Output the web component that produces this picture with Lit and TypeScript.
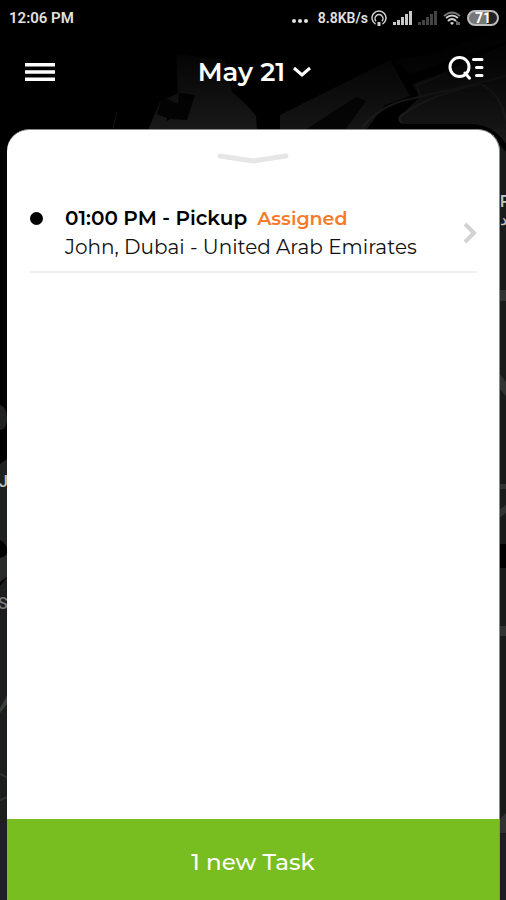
import { LitElement, html, css, svg } from "lit";
import { customElement, property, state } from "lit/decorators.js";

interface Task {
  time: string;
  kind: string;
  status: string;
  place: string;
}

@customElement("map-backdrop")
class MapBackdrop extends LitElement {
  static styles = css`
    :host { display: block; overflow: hidden; }
    svg { display: block; width: 100%; height: 100%; }
    .label { font: 500 16px Roboto, sans-serif; fill: #c4c6c6; }
    .dim { fill: #77797a; }
  `;
  render() {
    return html`<svg viewBox="0 0 506 900" preserveAspectRatio="none" aria-hidden="true">
      <defs>
        <linearGradient id="fade" x1="0" y1="0" x2="0" y2="1">
          <stop offset="0" stop-color="#000" />
          <stop offset="0.4" stop-color="#000" stop-opacity="0.85" />
          <stop offset="1" stop-color="#000" stop-opacity="0.1" />
        </linearGradient>
      </defs>
      <rect width="506" height="900" fill="#000" />
      ${svg`
        <path d="M148 130 L160 102 L178 93 L176 54 L225 60 L232 92 Q248 105 256 116 L257 130Z" fill="#1b1b1b" />
        <path d="M179 93 L195 95 L187 120 L170 119 L167 121 L167 118 L157 114 L162 97 L178 104Z" fill="#040404" />
        <path d="M117 112 L113 128" stroke="#1b1b1b" fill="none" />
        <path d="M280 115 L390 60 L410 96 L385 105 L366 130 L280 130Z" fill="#171717" />
        <path d="M305 130 L356 97 L366 101 L345 130Z" fill="#060606" />
        <path d="M412 84 L440 74 L506 44 L506 144 Q493 124 470 124 L402 124 Q394 119 402 114 L420 97Z" fill="#171717" />
        <path d="M362 128 Q380 105 410 99 Q450 90 506 76 M420 97 L417 85 L440 76 M402 123 Q396 117 405 113 Q430 95 480 84 Q500 92 506 120" fill="none" stroke="#232323" stroke-width="2" />
        <path d="M395 60 L440 52 L506 26 L506 42 L410 74Z" fill="#0d0d0d" />
        <path d="M0 405 Q7 407 7 418 Q7 430 0 430Z M0 464 L7 459 L7 548 Q3 540 0 540Z" fill="#202222" />
        <path d="M0 586 L8 576 V900 H0Z" fill="#1c1e1e" />
        <path d="M0 558 Q8 556 8 550 V576 L0 582Z" fill="#292b2b" />
        <path d="M0 708 L8 694 V703 L0 713Z" fill="#3b3f3c" />
        <path d="M0 774 L8 778 M0 800 L8 797" stroke="#303231" stroke-width="2" />
        <rect y="820" width="8" height="80" fill="#211f24" />
        <path d="M499 144 L506 152 V900 H499Z" fill="#191b1b" />
        <path d="M499 290 H506 V301 H499Z M499 373 L506 382 V396 L499 388Z M499 484 H506 V489 H499Z M499 510 L506 505 V513 L499 518Z M499 626 H506 V636 H499Z M499 820 L506 813 V833 H499Z" fill="#303332" />
        <rect x="500" y="544" width="6" height="24" fill="#000" />
        <rect x="499" y="834" width="7" height="66" fill="#201e22" />
        <text class="label" x="500" y="207">P</text>
        <text class="label" x="500" y="225">د</text>
        <text class="label" x="-1" y="487">J</text>
        <text class="label dim" x="-2" y="609">S</text>
      `}
      <rect width="506" height="130" fill="url(#fade)" />
    </svg>`;
  }
}

@customElement("status-bar")
class StatusBar extends LitElement {
  static styles = css`
    :host {
      display: flex; align-items: center; justify-content: space-between;
      height: 36px; padding: 0 7px 0 9px; box-sizing: border-box;
      color: #e2e2e2; font-family: Roboto, sans-serif;
    }
    .clock { font-size: 15px; font-weight: 600; }
    .right { display: flex; align-items: center; gap: 6px; }
    .speed { display: flex; align-items: center; gap: 3px; font-size: 14px; font-weight: 600; }
    svg { display: block; }
    .battery {
      box-sizing: border-box; width: 32px; height: 16px; border: 2px solid #bdbdbd; border-radius: 8px;
      background: linear-gradient(90deg, #777 64%, #222 64%);
      font-size: 14px; font-weight: 700; line-height: 12px; text-align: center; color: #fff;
    }
  `;
  private bars(color: string) {
    return html`<svg width="19" height="14" viewBox="0 0 19 14" fill=${color} aria-hidden="true">
      <path d="M0 11h3v3h-3zM4 9h3v5h-3zM8 6h3v8h-3zM12 3h3v11h-3zM16 0h3v14h-3z" />
    </svg>`;
  }
  render() {
    return html`
      <span class="clock">12:06 PM</span>
      <div class="right">
        <svg width="20" height="12" viewBox="0 0 20 12" fill="#e2e2e2" aria-hidden="true">
          <circle cx="2" cy="9" r="2" /><circle cx="8" cy="9" r="2" /><circle cx="14" cy="9" r="2" />
        </svg>
        <span class="speed">8.8KB/s
          <svg width="16" height="16" viewBox="0 0 16 16" fill="none" stroke="#d0d0d0" stroke-width="1.5" aria-hidden="true">
            <path d="M4.500 14a7 7 0 1 1 7 0M5 11.200a4 4 0 1 1 6 0" />
            <path d="M8 12v4" stroke-width="3" />
          </svg>
        </span>
        ${this.bars("#c9c9c9")} ${this.bars("#444")}
        <svg width="18" height="15" viewBox="0 0 18 15" fill="none" stroke="#d0d0d0" stroke-width="2" aria-hidden="true">
          <path d="M1 5Q9-2 17 5" stroke="#777" />
          <path d="M3 7Q9 2 15 7M5 10Q9 6 13 10" />
          <path d="M9 14L7 12Q9 10 11 12Z" fill="#d0d0d0" stroke="none" />
          <path d="M14 10v4M16 11v3" stroke-width="1" />
        </svg>
        <span class="battery">71</span>
      </div>
    `;
  }
}

@customElement("app-root")
class AppRoot extends LitElement {
  @property() date = "May 21";
  @state() private tasks: Task[] = [
    { time: "01:00 PM", kind: "Pickup", status: "Assigned", place: "John, Dubai - United Arab Emirates" },
  ];

  static styles = css`
    :host {
      display: flex; flex-direction: column; position: relative;
      min-height: 100vh; background: #000;
      font-family: Montserrat, Inter, sans-serif;
    }
    button { border: 0; padding: 0; background: none; font: inherit; color: inherit; cursor: pointer; }
    svg { display: block; }
    map-backdrop { position: absolute; inset: 0; }
    status-bar, header, main { position: relative; }
    header {
      display: grid; grid-template-columns: 1fr auto 1fr; align-items: center;
      height: 72px; margin-bottom: 21px; padding: 0 22px 0 25px; color: #fff;
    }
    .date { display: flex; align-items: center; gap: 8px; font-size: 26px; font-weight: 600; }
    .menu { justify-self: start; }
    .search { justify-self: end; padding-bottom: 8px; }
    main {
      flex: 1; display: flex; flex-direction: column;
      margin: 0 6px 0 7px; border: solid #8a8a8a; border-width: 1px 1px 0 0;
      border-radius: 22px 22px 0 0; background: #fff; overflow: hidden;
    }
    .handle { align-self: center; margin-top: 21px; }
    ul { flex: 1; list-style: none; margin: 31px 22px 0 23px; padding: 0; }
    .task {
      display: flex; align-items: center; gap: 22px;
      padding: 8px 0 10px; border-bottom: 2px solid #efefef;
      color: #111; text-decoration: none;
    }
    .dot { align-self: flex-start; flex: none; width: 13px; height: 13px; margin-top: 8px; border-radius: 50%; background: #000; }
    .text { flex: 1; min-width: 0; font-size: 20px; line-height: 28px; }
    .title { display: flex; align-items: baseline; gap: 10px; font-weight: 600; color: #000; }
    .status { color: #f47b2a; font-size: 19px; }
    .new { height: 81px; padding-top: 4px; background: #78be20; color: #fff; font-size: 23px; font-weight: 500; }
  `;

  render() {
    return html`
      <map-backdrop></map-backdrop>
      <status-bar></status-bar>
      <header>
        <button class="menu" aria-label="Menu">
          <svg width="30" height="18" viewBox="0 0 30 18" fill="#fff"><path d="M0 0h30v3.500H0zM0 7.200h30v3.500H0zM0 14.400h30v3.500H0z" /></svg>
        </button>
        <button class="date">
          ${this.date}
          <svg width="18" height="12" viewBox="0 0 18 12" fill="none" stroke="#fff" stroke-width="3"><path d="M1 2l8 7 8-7" /></svg>
        </button>
        <button class="search" aria-label="Search and filter">
          <svg width="36" height="24" viewBox="0 0 36 24" fill="none" stroke="#fff" stroke-width="3" stroke-linecap="round">
            <circle cx="11.500" cy="11" r="9.500" /><path d="M17 17l4.500 5.200M25.500 3.500h8.500M28.500 11.500h5.500M28.500 19.500h5.500" />
          </svg>
        </button>
      </header>
      <main>
        <button class="handle" aria-label="Collapse">
          <svg width="72" height="14" viewBox="0 0 72 14" fill="none" stroke="#e6e6e6" stroke-width="5" stroke-linecap="round" stroke-linejoin="round"><path d="M3 5l33 5 33-5" /></svg>
        </button>
        <ul>
          ${this.tasks.map(
            (t) => html`<li>
              <a class="task" href="#task">
                <span class="dot"></span>
                <div class="text">
                  <div class="title"><span>${t.time} - ${t.kind}</span><span class="status">${t.status}</span></div>
                  <div>${t.place}</div>
                </div>
                <svg width="14" height="22" viewBox="0 0 14 22" fill="none" stroke="#d2d2d2" stroke-width="4"><path d="M2 2l9 9-9 9" /></svg>
              </a>
            </li>`
          )}
        </ul>
        <button class="new">${this.tasks.length} new Task</button>
      </main>
    `;
  }
}
